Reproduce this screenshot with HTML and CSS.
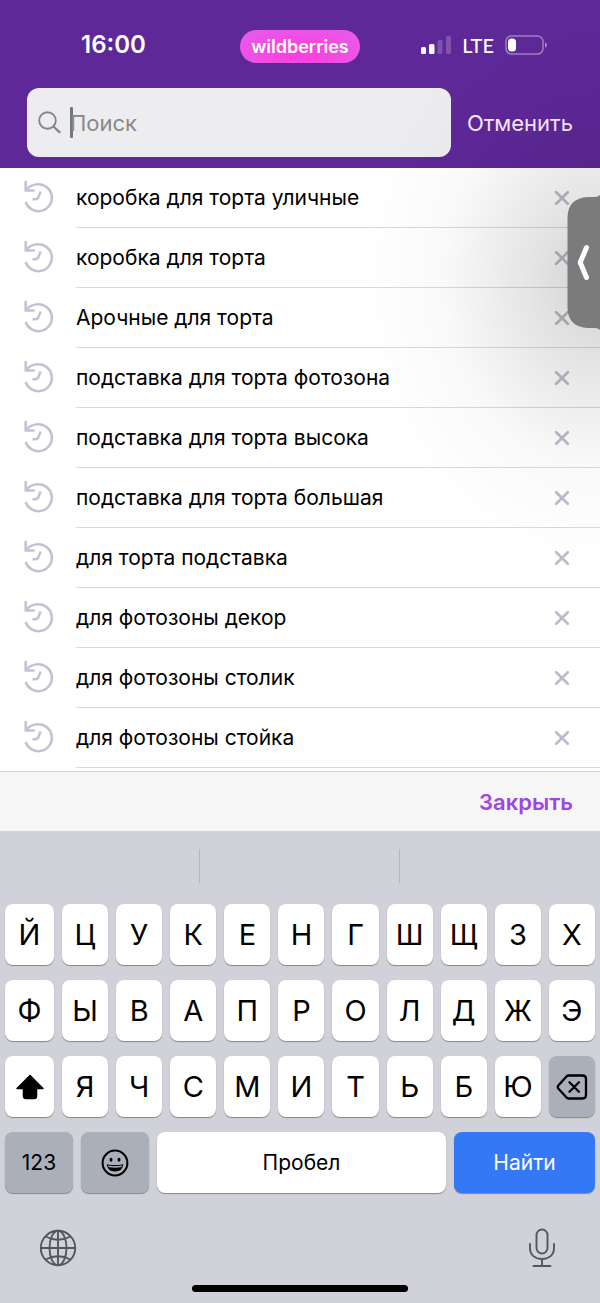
FILE: index.html
```html
<!DOCTYPE html>
<html lang="ru">
<head>
<meta charset="utf-8">
<meta name="viewport" content="width=device-width, initial-scale=1">
<title>Поиск</title>
<link rel="stylesheet" href="styles.css">
</head>
<body>
<svg class="sprite" aria-hidden="true">
  <symbol id="history" viewBox="0 0 32 36">
    <path d="M4 10.200C7 6 11 4.200 16.500 4.200A13.500 13.500 0 1 1 3.600 22M3.700 1v9.500h9M10.500 19.300h2.700c1.800 0 2.500-.5 3.100-2l2.400-5.800" fill="none" stroke="currentColor" stroke-width="2.500"/>
  </symbol>
  <symbol id="cross" viewBox="0 0 16 16">
    <path d="M2.200 2.200l11.600 11.600M13.800 2.200L2.200 13.800" fill="none" stroke="currentColor" stroke-width="2.700" stroke-linecap="round"/>
  </symbol>
</svg>
<div class="screen">
  <header class="header">
    <div class="status">
      <time class="clock">16:00</time>
      <span class="brand">wildberries</span>
      <div class="signals">
        <svg class="bars" width="30" height="20" viewBox="0 0 30 20" aria-hidden="true"><g fill="#fff"><rect x="0" y="12" width="5" height="7" rx="1.500"/><rect x="8" y="9" width="5.500" height="10" rx="1.500"/><rect x="16.500" y="5" width="5" height="14" rx="1.500" opacity=".2"/><rect x="25" y="1" width="5" height="18" rx="1.500" opacity=".2"/></g></svg>
        <span class="network">LTE</span>
        <svg width="43" height="20" viewBox="0 0 43 20" aria-hidden="true"><rect x="1" y="1" width="37" height="18" rx="5.500" fill="none" stroke="#fff" stroke-opacity=".4" stroke-width="1.600"/><path d="M40 7.500c2.600.6 2.600 4.400 0 5z" fill="#fff" opacity=".45"/><rect x="3" y="3.500" width="8" height="13" rx="3.500" fill="#fff"/></svg>
      </div>
    </div>
    <form class="search">
      <label class="field">
        <svg width="24" height="24" viewBox="0 0 24 24" aria-hidden="true"><circle cx="9.500" cy="9.500" r="8.300" fill="none" stroke="#858588" stroke-width="1.900"/><path d="M15.500 15.500L21.500 21.200" stroke="#858588" stroke-width="2.300" stroke-linecap="round"/></svg>
        <span class="caret"></span>
        <input class="query" type="text" placeholder="Поиск" aria-label="Поиск">
      </label>
      <button class="cancel" type="button">Отменить</button>
    </form>
  </header>

  <main class="content">
    <ul class="history">
      <li class="item"><svg class="clock-icon"><use href="#history"/></svg><div class="line"><span>коробка для торта уличные</span><button class="remove" type="button" aria-label="Удалить"><svg class="cross"><use href="#cross"/></svg></button></div></li>
      <li class="item"><svg class="clock-icon"><use href="#history"/></svg><div class="line"><span>коробка для торта</span><button class="remove" type="button" aria-label="Удалить"><svg class="cross"><use href="#cross"/></svg></button></div></li>
      <li class="item"><svg class="clock-icon"><use href="#history"/></svg><div class="line"><span>Арочные для торта</span><button class="remove" type="button" aria-label="Удалить"><svg class="cross"><use href="#cross"/></svg></button></div></li>
      <li class="item"><svg class="clock-icon"><use href="#history"/></svg><div class="line"><span>подставка для торта фотозона</span><button class="remove" type="button" aria-label="Удалить"><svg class="cross"><use href="#cross"/></svg></button></div></li>
      <li class="item"><svg class="clock-icon"><use href="#history"/></svg><div class="line"><span>подставка для торта высока</span><button class="remove" type="button" aria-label="Удалить"><svg class="cross"><use href="#cross"/></svg></button></div></li>
      <li class="item"><svg class="clock-icon"><use href="#history"/></svg><div class="line"><span>подставка для торта большая</span><button class="remove" type="button" aria-label="Удалить"><svg class="cross"><use href="#cross"/></svg></button></div></li>
      <li class="item"><svg class="clock-icon"><use href="#history"/></svg><div class="line"><span>для торта подставка</span><button class="remove" type="button" aria-label="Удалить"><svg class="cross"><use href="#cross"/></svg></button></div></li>
      <li class="item"><svg class="clock-icon"><use href="#history"/></svg><div class="line"><span>для фотозоны декор</span><button class="remove" type="button" aria-label="Удалить"><svg class="cross"><use href="#cross"/></svg></button></div></li>
      <li class="item"><svg class="clock-icon"><use href="#history"/></svg><div class="line"><span>для фотозоны столик</span><button class="remove" type="button" aria-label="Удалить"><svg class="cross"><use href="#cross"/></svg></button></div></li>
      <li class="item"><svg class="clock-icon"><use href="#history"/></svg><div class="line"><span>для фотозоны стойка</span><button class="remove" type="button" aria-label="Удалить"><svg class="cross"><use href="#cross"/></svg></button></div></li>
    </ul>
  </main>

  <div class="toolbar"><button class="close" type="button">Закрыть</button></div>

  <section class="keyboard" aria-label="Клавиатура">
    <div class="suggestions"><span></span><span></span><span></span></div>
    <div class="keys">
      <div class="row">
        <button class="key">Й</button><button class="key">Ц</button><button class="key">У</button><button class="key">К</button><button class="key">Е</button><button class="key">Н</button><button class="key">Г</button><button class="key">Ш</button><button class="key">Щ</button><button class="key">З</button><button class="key">Х</button>
      </div>
      <div class="row">
        <button class="key">Ф</button><button class="key">Ы</button><button class="key">В</button><button class="key">А</button><button class="key">П</button><button class="key">Р</button><button class="key">О</button><button class="key">Л</button><button class="key">Д</button><button class="key">Ж</button><button class="key">Э</button>
      </div>
      <div class="row">
        <button class="key" aria-label="Регистр"><svg width="30" height="26" viewBox="0 0 30 26"><path d="M15 1.500L28 14.500H21.500V22q0 2.500-2.500 2.500H11Q8.500 24.500 8.500 22V14.500H2z" fill="#000" stroke="#000" stroke-width="1.500" stroke-linejoin="round"/></svg></button><button class="key">Я</button><button class="key">Ч</button><button class="key">С</button><button class="key">М</button><button class="key">И</button><button class="key">Т</button><button class="key">Ь</button><button class="key">Б</button><button class="key">Ю</button><button class="key dark" aria-label="Стереть"><svg width="32" height="26" viewBox="0 0 32 26" fill="none" stroke="#000" stroke-width="2.300" stroke-linejoin="round" stroke-linecap="round"><path d="M12.500 1.500H26.500Q30 1.500 30 5V21Q30 24.500 26.500 24.500H12.500Q11.300 24.500 10.500 23.600L2.300 14.500Q1.200 13 2.300 11.500L10.500 2.400Q11.300 1.500 12.500 1.500zM13.500 8.300l9.400 9.400M22.900 8.300l-9.400 9.400"/></svg></button>
      </div>
      <div class="row bottom">
        <button class="key dark word">123</button>
        <button class="key dark" aria-label="Эмодзи"><svg width="28" height="28" viewBox="0 0 28 28"><circle cx="14" cy="14" r="12.400" fill="none" stroke="#000" stroke-width="2"/><ellipse cx="10" cy="10.700" rx="1.500" ry="2" /><ellipse cx="18" cy="10.700" rx="1.500" ry="2"/><path d="M5.700 15.200Q14 17 22.300 15.200Q21.500 22.500 14 22.500T5.700 15.200z"/><path d="M7 16.500Q14 18 21 16.500L20.500 18Q14 19.500 7.500 18z" fill="#abafba"/></svg></button>
        <button class="key word">Пробел</button>
        <button class="key word go">Найти</button>
      </div>
    </div>
    <div class="extras">
      <button class="extra" aria-label="Язык"><svg width="38" height="38" viewBox="0 0 38 38" fill="none" stroke="#55575b" stroke-width="1.900"><circle cx="19" cy="19" r="17.200"/><ellipse cx="19" cy="19" rx="8.500" ry="17.200"/><path d="M19 1.800v34.400M1.800 19h34.400M6.500 7.500q12.500 6.500 25 0M6.500 30.500q12.500-6.500 25 0"/></svg></button>
      <button class="extra" aria-label="Диктовка"><svg width="28" height="40" viewBox="0 0 28 40" fill="none" stroke="#55575b" stroke-width="1.900" stroke-linecap="round"><rect x="8.500" y="1.500" width="11" height="24" rx="5.500"/><path d="M2 16v4c0 7 5 11 12 11s12-4 12-11v-4M14 31v7M5.500 38h17"/></svg></button>
    </div>
    <div class="home"></div>
  </section>

  <button class="drawer" aria-label="Открыть панель"><svg width="33" height="135" viewBox="0 0 33 135"><path d="M33 0Q31 2 28 2H21Q.5 3 .5 23V112Q.5 132 21 133H28Q31 133 33 135z" fill="#7b7b7b"/><path d="M19.500 52.500L13.200 67.500L19.500 82.500" fill="none" stroke="#fff" stroke-width="5" stroke-linecap="round" stroke-linejoin="round"/></svg></button>
</div>
</body>
</html>
```

FILE: styles.css
```css
* { box-sizing: border-box; }
body {
  margin: 0;
  font-family: Inter, "Liberation Sans", sans-serif;
  font-size: 22px;
  color: #111;
  background: #d1d2d9;
}
button { border: 0; padding: 0; margin: 0; background: none; font: inherit; color: inherit; }
svg { display: block; }
.sprite { display: none; }
.screen { position: relative; overflow: hidden; }

.header { background: #5e2898; color: #fff; padding: 28px 27px 11px; }
.status { display: grid; grid-template-columns: 1fr 120px 1fr; align-items: center; height: 36px; }
.clock { font-size: 24px; font-weight: 600; padding: 0 0 2px 54px; line-height: 32px; }
.brand {
  height: 33px;
  border-radius: 17px;
  background: radial-gradient(ellipse at 50% 70%, #fb3fe0 10%, #e35fea 100%);
  font-size: 18px;
  font-weight: 600;
  line-height: 33px;
  text-align: center;
}
.signals { display: flex; align-items: center; justify-content: flex-end; gap: 11px; padding: 0 25px 3px 0; }
.network { font-family: Lato, "Open Sans", sans-serif; font-size: 20px; font-weight: 500; line-height: 32px; }
.search { display: flex; align-items: center; gap: 16px; margin-top: 24px; }
.field {
  flex: 1;
  min-width: 0;
  display: flex;
  align-items: center;
  height: 69px;
  padding: 0 11px;
  border-radius: 12px;
  background: #ededef;
}
.caret { width: 3px; height: 31px; margin: 0 -3px 0 8px; border-radius: 1px; background: #77777b; }
.query {
  flex: 1;
  min-width: 0;
  border: 0;
  padding: 0;
  outline: 0;
  background: none;
  font: inherit;
  color: #111;
}
.query::placeholder { color: #88888b; opacity: 1; }
.cancel { color: #fbeaff; }

.content { background: #fff; padding-bottom: 3px; }
.history { margin: 0; padding: 0; list-style: none; }
.item { display: flex; align-items: center; height: 60px; padding-left: 22px; font-size: 21px; color: #000; }
.clock-icon { flex: none; width: 32px; height: 36px; color: #c4c2d2; }
.line {
  flex: 1;
  display: flex;
  align-items: center;
  justify-content: space-between;
  height: 60px;
  margin-left: 22px;
  padding-right: 30px;
  border-bottom: 1px solid #d9d9dc;
}
.remove { color: #bdbbca; }
.cross { width: 16px; height: 16px; }

.toolbar {
  display: flex;
  align-items: center;
  justify-content: flex-end;
  height: 60px;
  padding-right: 27px;
  border-top: 1px solid #d4d4d6;
  background: #f6f6f7;
}
.close { color: #a044e2; font-weight: 600; }

.keyboard { background: #d1d2d9; padding-bottom: 11px; }
.suggestions { display: grid; grid-template-columns: repeat(3, 1fr); padding: 18px 0 21px; }
.suggestions span { height: 34px; border-right: 1px solid #b7b8bf; }
.suggestions span:last-child { border: 0; }
.keys { display: grid; gap: 15px; padding: 0 5px; }
.row { display: grid; grid-template-columns: 49px repeat(10, 1fr); gap: 8px; }
.row.bottom { grid-template-columns: 68px 68px 1fr 141px; }
.key {
  display: flex;
  align-items: center;
  justify-content: center;
  height: 61px;
  border-radius: 8px;
  background: #fff;
  box-shadow: 0 1px 1px #85878c;
  font-size: 29px;
  color: #000;
}
.key.dark { background: #abafba; }
.key.word { font-size: 21px; }
.key.go { background: #3478f6; color: #fff; }
.extras { display: flex; align-items: center; justify-content: space-between; padding: 35px 44px 0 39px; }
.home { width: 36%; height: 7px; margin: 17px auto 0; border-radius: 4px; background: #000; }
.keyboard { padding-bottom: 10px; }

.drawer { position: absolute; top: 195px; right: 0; }
.drawer svg { position: relative; }
.drawer::before {
  content: "";
  position: absolute;
  top: -205px;
  right: -240px;
  width: 480px;
  height: 580px;
  background: radial-gradient(closest-side, rgba(0, 0, 0, .18), rgba(0, 0, 0, .1) 30%, rgba(0, 0, 0, .025) 65%, transparent);
  pointer-events: none;
}
```
